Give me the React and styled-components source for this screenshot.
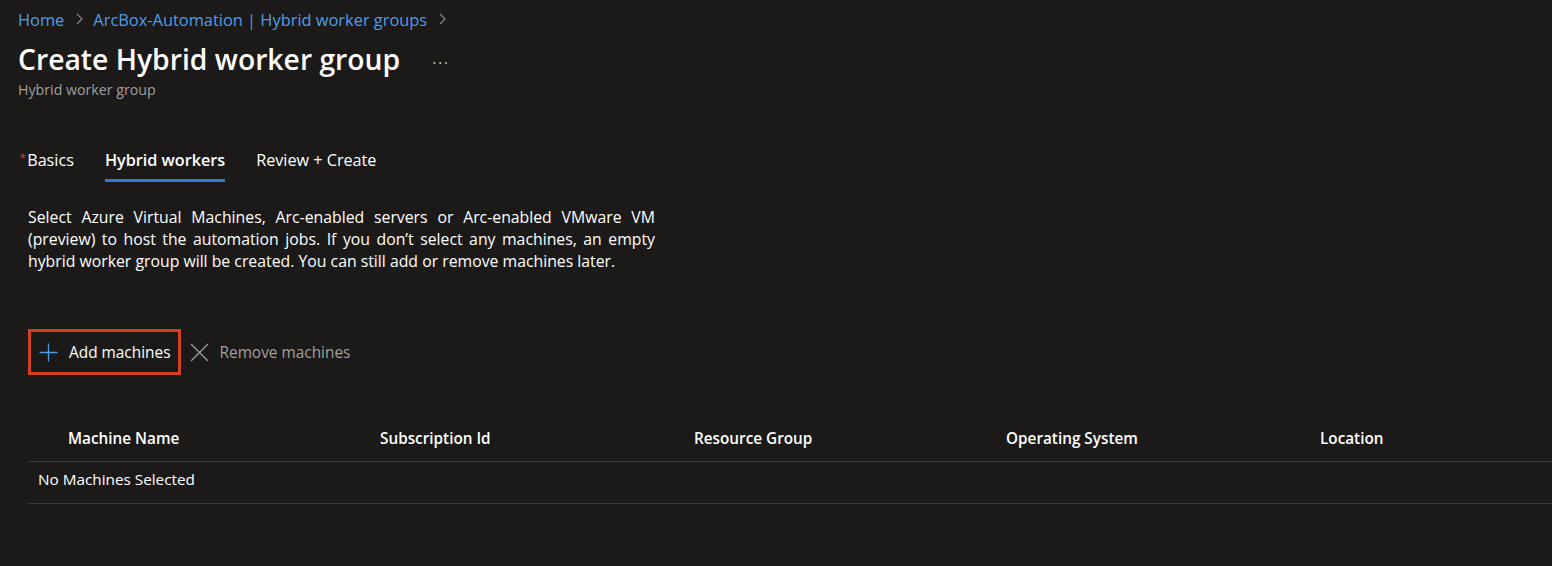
import React from 'react';
import styled, { createGlobalStyle } from 'styled-components';

const GlobalStyle = createGlobalStyle`
    html, body {
        margin: 0;
        padding: 0;
        background: #1b1a19;
    }
    body {
        font-family: 'Open Sans', 'Liberation Sans', sans-serif;
        color: #ffffff;
    }
`;

const Page = styled.div`
    width: 1552px;
    height: 566px;
    background: #1b1a19;
    overflow: hidden;
    box-sizing: border-box;
    padding: 8px 0 0 18px;
`;

const Breadcrumb = styled.nav`
    display: flex;
    align-items: center;
    gap: 10.5px;
    height: 22px;
    font-size: 16.4px;
    color: #4f9de8;
`;

const Crumb = styled.span`
    color: #4f9de8;
`;

const Chevron = styled.svg`
    width: 8px;
    height: 12px;
    stroke: #8a8886;
    fill: none;
    stroke-width: 1.2;
`;

const TitleRow = styled.div`
    display: flex;
    align-items: center;
    margin-top: 10px;
    height: 38px;
`;

const Title = styled.h1`
    margin: 0;
    font-size: 28.3px;
    font-weight: 600;
    color: #ffffff;
`;

const More = styled.span`
    margin-left: 32px;
    margin-top: 5px;
    font-size: 15px;
    letter-spacing: 2px;
    color: #c8c6c4;
`;

const Subtitle = styled.div`
    margin-top: 2px;
    font-size: 14.2px;
    color: #a19f9d;
`;

const Tabs = styled.div`
    display: flex;
    gap: 31px;
    margin-top: 50px;
    padding-left: 1px;
`;

const Tab = styled.div`
    padding-bottom: 8px;
    font-size: 16.2px;
    font-weight: ${p => (p.$active ? 600 : 400)};
    color: #ffffff;
    border-bottom: 3px solid ${p => (p.$active ? '#2f7bd6' : 'transparent')};
`;

const Required = styled.span`
    color: #d13438;
    font-size: 13px;
    margin-right: 1px;
    vertical-align: top;
`;

const Body = styled.div`
    padding-left: 10px;
`;

const Description = styled.p`
    margin: 24px 0 0;
    width: 627px;
    font-size: 15.8px;
    line-height: 22px;
    text-align: justify;
    color: #ffffff;
`;

const Toolbar = styled.div`
    display: flex;
    align-items: center;
    margin-top: 57px;
    height: 46px;
`;

const ToolButton = styled.button`
    display: flex;
    align-items: center;
    gap: ${p => (p.$highlight ? '10px' : '9px')};
    height: 46px;
    box-sizing: border-box;
    padding: ${p => (p.$highlight ? '0 8px 0 7px' : '0 8px 0 5px')};
    background: transparent;
    border: 3px solid ${p => (p.$highlight ? '#d2401c' : 'transparent')};
    font-family: inherit;
    font-size: 15.4px;
    color: ${p => (p.$disabled ? '#a19f9d' : '#ffffff')};
    cursor: pointer;
`;

const Icon = styled.svg`
    width: 21px;
    height: 21px;
    fill: none;
    stroke-width: 1.3;
`;

const Table = styled.div`
    margin-top: 42px;
`;

const Row = styled.div`
    display: grid;
    grid-template-columns: 352px 314px 312px 314px 1fr;
    align-items: center;
    height: ${p => (p.$header ? '41px' : '34px')};
    box-sizing: content-box;
    padding-bottom: ${p => (p.$header ? '3px' : '7px')};
    border-bottom: 1px solid #3b3a39;
`;

const HeadCell = styled.div`
    font-size: 15.3px;
    font-weight: 600;
    color: #ffffff;
    padding-left: ${p => (p.$first ? '40px' : '0')};
`;

const Cell = styled.div`
    font-size: 15.3px;
    color: #ffffff;
    padding-left: 10px;
    grid-column: 1 / -1;
`;

const ChevronIcon = () => (
    <Chevron viewBox="0 0 8 12">
        <path d="M2 1 L7 6 L2 11" />
    </Chevron>
);

const columns = ['Machine Name', 'Subscription Id', 'Resource Group', 'Operating System', 'Location'];

const App = () => {
    return (
        <>
            <GlobalStyle />
            <Page>
                <Breadcrumb>
                    <Crumb>Home</Crumb>
                    <ChevronIcon />
                    <Crumb>ArcBox-Automation | Hybrid worker groups</Crumb>
                    <ChevronIcon />
                </Breadcrumb>
                <TitleRow>
                    <Title>Create Hybrid worker group</Title>
                    <More>···</More>
                </TitleRow>
                <Subtitle>Hybrid worker group</Subtitle>
                <Tabs>
                    <Tab>
                        <Required>*</Required>Basics
                    </Tab>
                    <Tab $active>Hybrid workers</Tab>
                    <Tab>Review + Create</Tab>
                </Tabs>
                <Body>
                    <Description>
                        Select Azure Virtual Machines, Arc-enabled servers or Arc-enabled VMware VM (preview) to host the
                        automation jobs. If you don’t select any machines, an empty hybrid worker group will be created.
                        You can still add or remove machines later.
                    </Description>
                    <Toolbar>
                        <ToolButton $highlight>
                            <Icon viewBox="0 0 21 21" style={{ stroke: '#4f9de8' }}>
                                <path d="M10.5 1.5 V19.5 M1.5 10.5 H19.5" />
                            </Icon>
                            Add machines
                        </ToolButton>
                        <ToolButton $disabled>
                            <Icon viewBox="0 0 21 21" style={{ stroke: '#a19f9d' }}>
                                <path d="M2 2 L19 19 M19 2 L2 19" />
                            </Icon>
                            Remove machines
                        </ToolButton>
                    </Toolbar>
                    <Table>
                        <Row $header>
                            {columns.map((c, i) => (
                                <HeadCell key={c} $first={i === 0}>
                                    {c}
                                </HeadCell>
                            ))}
                        </Row>
                        <Row>
                            <Cell>No Machines Selected</Cell>
                        </Row>
                    </Table>
                </Body>
            </Page>
        </>
    );
};

export default App;
